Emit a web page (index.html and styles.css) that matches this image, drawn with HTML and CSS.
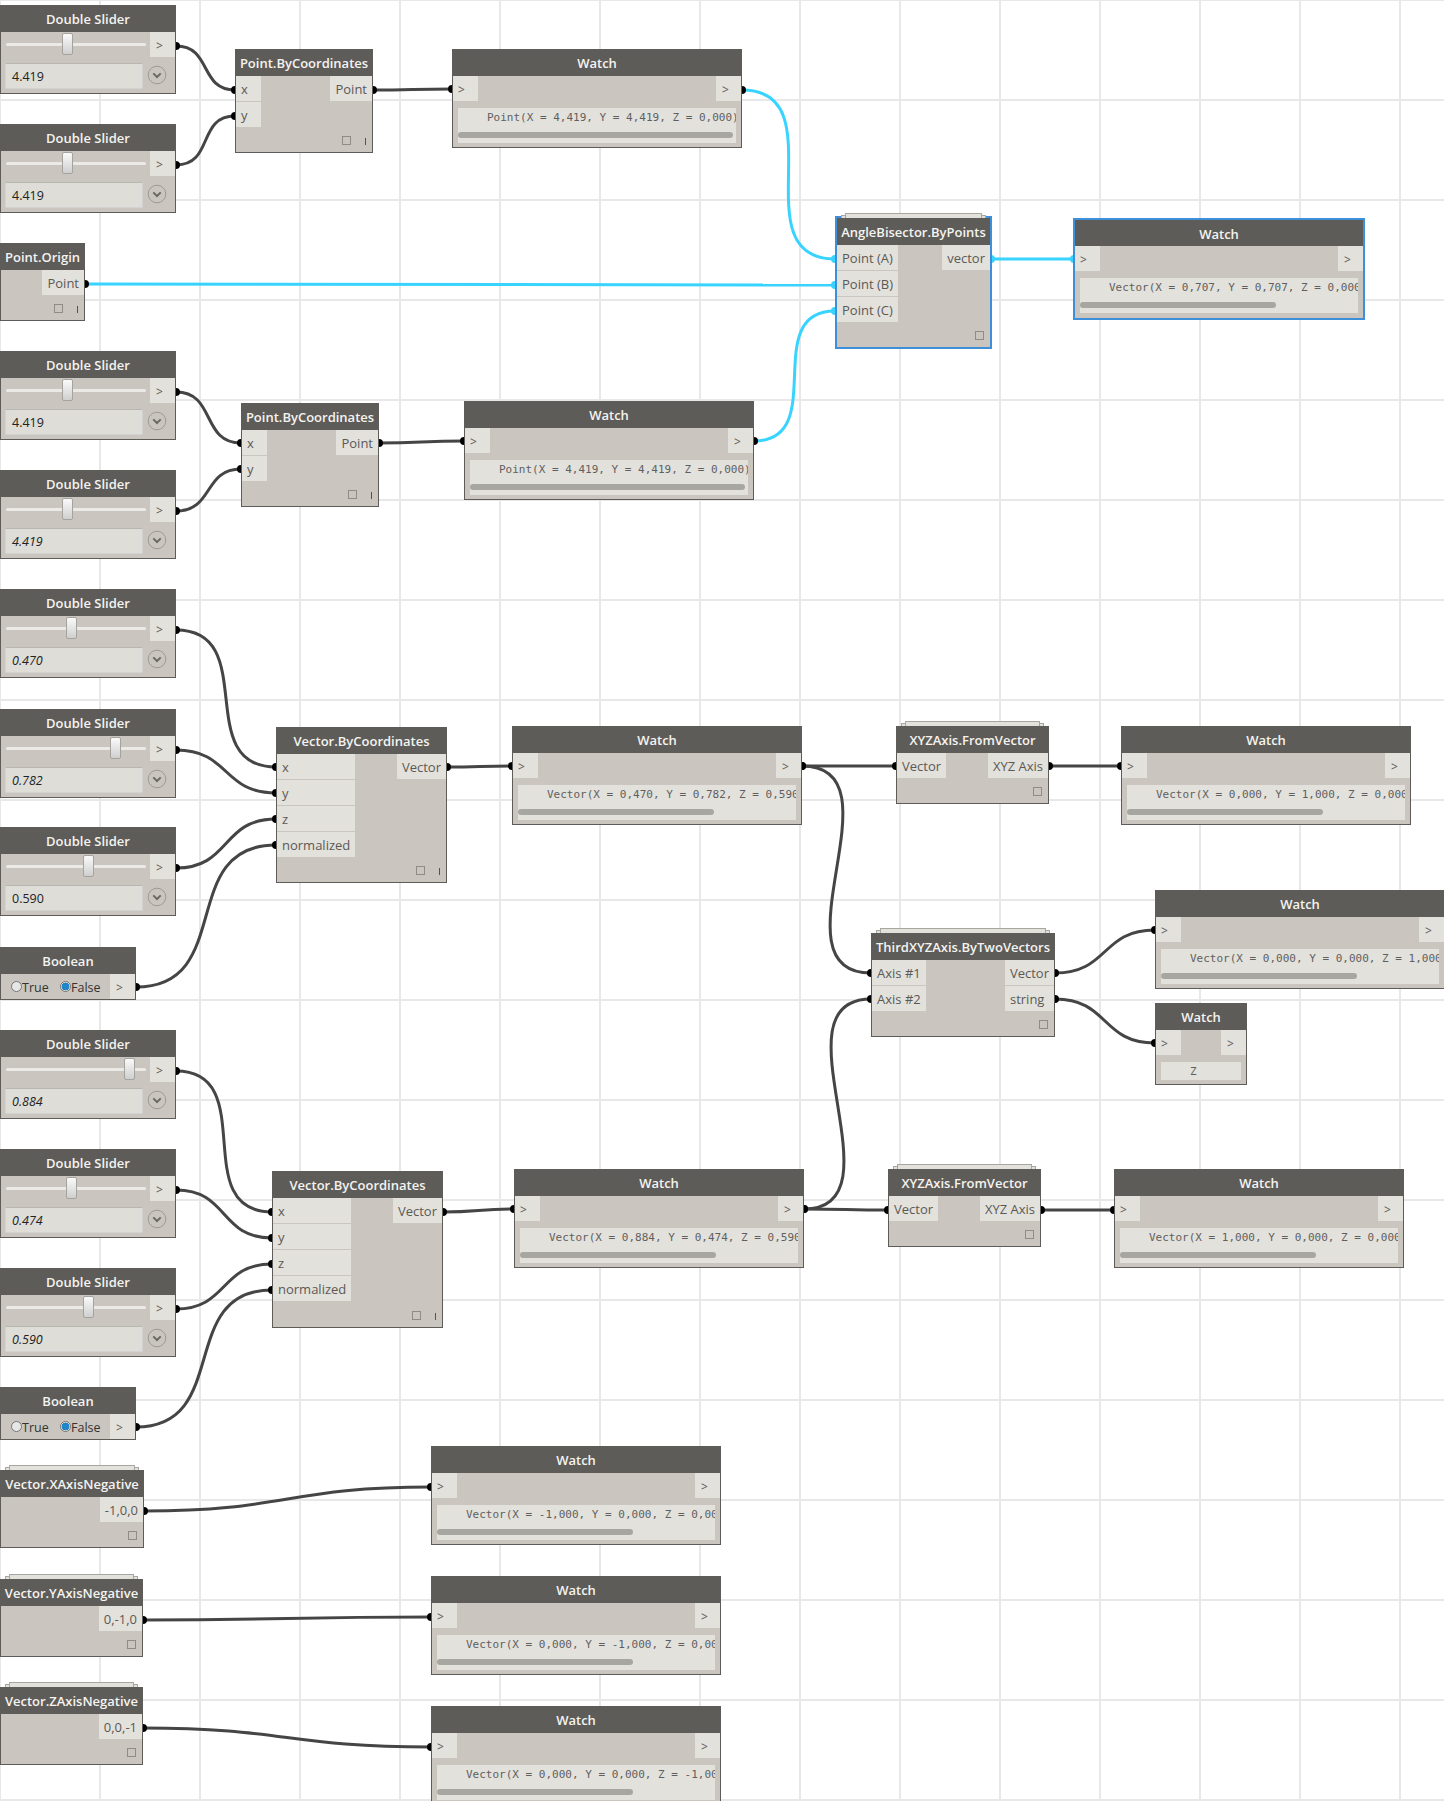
FILE: index.html
```html
<!DOCTYPE html>
<html lang="en">
<head>
    <meta charset="UTF-8">
    <title>Vector graph</title>
    <link rel="stylesheet" href="styles.css">
</head>
<body>
<div class="canvas">

    <!-- wires sit under the nodes, so the port dots show as half circles -->
    <svg class="wires" width="1444" height="1801">
        <defs>
            <marker id="dot" markerUnits="userSpaceOnUse" markerWidth="10" markerHeight="10" refX="5" refY="5"><circle cx="5" cy="5" r="4" fill="#000"/></marker>
            <marker id="dotHot" markerUnits="userSpaceOnUse" markerWidth="10" markerHeight="10" refX="5" refY="5"><circle cx="5" cy="5" r="4" fill="#38d4ff"/></marker>
        </defs>
        <g class="wire">
            <path marker-start="url(#dot)" marker-end="url(#dot)" d="M176 46 C212 46 199 90 235 90"/>
            <path marker-start="url(#dot)" marker-end="url(#dot)" d="M176 165 C214 165 197 116 235 116"/>
            <path marker-start="url(#dot)" marker-end="url(#dot)" d="M373 90 C412 90 413 89 452 89"/>
            <path marker-start="url(#dot)" marker-end="url(#dot)" d="M176 392 C216 392 201 443 241 443"/>
            <path marker-start="url(#dot)" marker-end="url(#dot)" d="M176 511 C214 511 203 469 241 469"/>
            <path marker-start="url(#dot)" marker-end="url(#dot)" d="M379 443 C421 443 422 441 464 441"/>
            <path marker-start="url(#dot)" marker-end="url(#dot)" d="M176 630 C261 630 191 767 276 767"/>
            <path marker-start="url(#dot)" marker-end="url(#dot)" d="M176 750 C230 750 222 793 276 793"/>
            <path marker-start="url(#dot)" marker-end="url(#dot)" d="M176 868 C231 868 221 819 276 819"/>
            <path marker-start="url(#dot)" marker-end="url(#dot)" d="M136 987 C236 987 176 845 276 845"/>
            <path marker-start="url(#dot)" marker-end="url(#dot)" d="M447 767 C480 767 480 766 512 766"/>
            <path marker-start="url(#dot)" marker-end="url(#dot)" d="M802 766 C850 766 850 766 896 766"/>
            <path marker-start="url(#dot)" marker-end="url(#dot)" d="M802 766 C905 766 768 973 871 973"/>
            <path marker-start="url(#dot)" marker-end="url(#dot)" d="M804 1209 C905 1209 770 999 871 999"/>
            <path marker-start="url(#dot)" marker-end="url(#dot)" d="M1055 973 C1109 973 1101 930 1155 930"/>
            <path marker-start="url(#dot)" marker-end="url(#dot)" d="M1055 999 C1109 999 1101 1043 1155 1043"/>
            <path marker-start="url(#dot)" marker-end="url(#dot)" d="M1049 766 C1085 766 1085 766 1121 766"/>
            <path marker-start="url(#dot)" marker-end="url(#dot)" d="M176 1071 C261 1071 187 1212 272 1212"/>
            <path marker-start="url(#dot)" marker-end="url(#dot)" d="M176 1190 C229 1190 219 1238 272 1238"/>
            <path marker-start="url(#dot)" marker-end="url(#dot)" d="M176 1309 C228 1309 220 1264 272 1264"/>
            <path marker-start="url(#dot)" marker-end="url(#dot)" d="M136 1427 C232 1427 176 1290 272 1290"/>
            <path marker-start="url(#dot)" marker-end="url(#dot)" d="M443 1212 C478 1212 479 1209 514 1209"/>
            <path marker-start="url(#dot)" marker-end="url(#dot)" d="M804 1209 C846 1209 846 1210 888 1210"/>
            <path marker-start="url(#dot)" marker-end="url(#dot)" d="M1041 1210 C1077 1210 1078 1210 1114 1210"/>
            <path marker-start="url(#dot)" marker-end="url(#dot)" d="M144 1511 C287 1511 288 1487 431 1487"/>
            <path marker-start="url(#dot)" marker-end="url(#dot)" d="M143 1620 C287 1620 287 1617 431 1617"/>
            <path marker-start="url(#dot)" marker-end="url(#dot)" d="M143 1728 C287 1728 287 1747 431 1747"/>
        </g>
        <g class="wire wire-hot">
            <path marker-start="url(#dot)" marker-end="url(#dotHot)" d="M742 90 C838 90 739 259 835 259"/>
            <path marker-start="url(#dot)" marker-end="url(#dotHot)" d="M85 284 L835 285"/>
            <path marker-start="url(#dot)" marker-end="url(#dotHot)" d="M754 441 C830 441 759 311 835 311"/>
            <path marker-start="url(#dotHot)" marker-end="url(#dotHot)" d="M991 259 C1032 259 1032 259 1074 259"/>
        </g>
    </svg>

    <!-- sliders -->
    <div class="node slider s1">
        <div class="node-title">Double Slider</div>
        <div class="slider-top"><div class="track"><span class="thumb at-67"></span></div><div class="port out-arrow">&gt;</div></div>
        <div class="slider-bottom"><div class="value">4.419</div><svg class="expand" width="20" height="20" viewBox="0 0 20 20"><circle cx="10" cy="10" r="8.8"/><path d="M6.3 8.4 L10 12 L13.7 8.4"/></svg></div>
    </div>
    <div class="node slider s2">
        <div class="node-title">Double Slider</div>
        <div class="slider-top"><div class="track"><span class="thumb at-67"></span></div><div class="port out-arrow">&gt;</div></div>
        <div class="slider-bottom"><div class="value">4.419</div><svg class="expand" width="20" height="20" viewBox="0 0 20 20"><circle cx="10" cy="10" r="8.8"/><path d="M6.3 8.4 L10 12 L13.7 8.4"/></svg></div>
    </div>
    <div class="node slider s3">
        <div class="node-title">Double Slider</div>
        <div class="slider-top"><div class="track"><span class="thumb at-67"></span></div><div class="port out-arrow">&gt;</div></div>
        <div class="slider-bottom"><div class="value">4.419</div><svg class="expand" width="20" height="20" viewBox="0 0 20 20"><circle cx="10" cy="10" r="8.8"/><path d="M6.3 8.4 L10 12 L13.7 8.4"/></svg></div>
    </div>
    <div class="node slider s4">
        <div class="node-title">Double Slider</div>
        <div class="slider-top"><div class="track"><span class="thumb at-67"></span></div><div class="port out-arrow">&gt;</div></div>
        <div class="slider-bottom"><div class="value edited">4.419</div><svg class="expand" width="20" height="20" viewBox="0 0 20 20"><circle cx="10" cy="10" r="8.8"/><path d="M6.3 8.4 L10 12 L13.7 8.4"/></svg></div>
    </div>
    <div class="node slider s5">
        <div class="node-title">Double Slider</div>
        <div class="slider-top"><div class="track"><span class="thumb at-71"></span></div><div class="port out-arrow">&gt;</div></div>
        <div class="slider-bottom"><div class="value edited">0.470</div><svg class="expand" width="20" height="20" viewBox="0 0 20 20"><circle cx="10" cy="10" r="8.8"/><path d="M6.3 8.4 L10 12 L13.7 8.4"/></svg></div>
    </div>
    <div class="node slider s6">
        <div class="node-title">Double Slider</div>
        <div class="slider-top"><div class="track"><span class="thumb at-115"></span></div><div class="port out-arrow">&gt;</div></div>
        <div class="slider-bottom"><div class="value edited">0.782</div><svg class="expand" width="20" height="20" viewBox="0 0 20 20"><circle cx="10" cy="10" r="8.8"/><path d="M6.3 8.4 L10 12 L13.7 8.4"/></svg></div>
    </div>
    <div class="node slider s7">
        <div class="node-title">Double Slider</div>
        <div class="slider-top"><div class="track"><span class="thumb at-88"></span></div><div class="port out-arrow">&gt;</div></div>
        <div class="slider-bottom"><div class="value">0.590</div><svg class="expand" width="20" height="20" viewBox="0 0 20 20"><circle cx="10" cy="10" r="8.8"/><path d="M6.3 8.4 L10 12 L13.7 8.4"/></svg></div>
    </div>
    <div class="node slider s8">
        <div class="node-title">Double Slider</div>
        <div class="slider-top"><div class="track"><span class="thumb at-129"></span></div><div class="port out-arrow">&gt;</div></div>
        <div class="slider-bottom"><div class="value edited">0.884</div><svg class="expand" width="20" height="20" viewBox="0 0 20 20"><circle cx="10" cy="10" r="8.8"/><path d="M6.3 8.4 L10 12 L13.7 8.4"/></svg></div>
    </div>
    <div class="node slider s9">
        <div class="node-title">Double Slider</div>
        <div class="slider-top"><div class="track"><span class="thumb at-71"></span></div><div class="port out-arrow">&gt;</div></div>
        <div class="slider-bottom"><div class="value edited">0.474</div><svg class="expand" width="20" height="20" viewBox="0 0 20 20"><circle cx="10" cy="10" r="8.8"/><path d="M6.3 8.4 L10 12 L13.7 8.4"/></svg></div>
    </div>
    <div class="node slider s10">
        <div class="node-title">Double Slider</div>
        <div class="slider-top"><div class="track"><span class="thumb at-88"></span></div><div class="port out-arrow">&gt;</div></div>
        <div class="slider-bottom"><div class="value edited">0.590</div><svg class="expand" width="20" height="20" viewBox="0 0 20 20"><circle cx="10" cy="10" r="8.8"/><path d="M6.3 8.4 L10 12 L13.7 8.4"/></svg></div>
    </div>

    <!-- booleans -->
    <div class="node bool b1">
        <div class="node-title">Boolean</div>
        <div class="bool-row"><span class="radio"></span><span class="radio-label">True</span><span class="radio on"></span><span class="radio-label">False</span><div class="port out-arrow">&gt;</div></div>
    </div>
    <div class="node bool b2">
        <div class="node-title">Boolean</div>
        <div class="bool-row"><span class="radio"></span><span class="radio-label">True</span><span class="radio on"></span><span class="radio-label">False</span><div class="port out-arrow">&gt;</div></div>
    </div>

    <!-- function nodes -->
    <div class="node pbc1">
        <div class="node-title">Point.ByCoordinates</div>
        <div class="ports"><div class="ports-in"><div class="port wide">x</div><div class="port wide">y</div></div><div class="ports-out"><div class="port">Point</div></div></div>
        <div class="node-foot"><span class="box"></span><span class="lace"></span></div>
    </div>
    <div class="node pbc2">
        <div class="node-title">Point.ByCoordinates</div>
        <div class="ports"><div class="ports-in"><div class="port wide">x</div><div class="port wide">y</div></div><div class="ports-out"><div class="port">Point</div></div></div>
        <div class="node-foot"><span class="box"></span><span class="lace"></span></div>
    </div>
    <div class="node origin">
        <div class="node-title">Point.Origin</div>
        <div class="ports"><div class="ports-in"></div><div class="ports-out"><div class="port">Point</div></div></div>
        <div class="node-foot"><span class="box"></span><span class="lace"></span></div>
    </div>
    <div class="node stacked selected angle">
        <div class="node-title">AngleBisector.ByPoints</div>
        <div class="ports"><div class="ports-in"><div class="port">Point (A)</div><div class="port">Point (B)</div><div class="port">Point (C)</div></div><div class="ports-out"><div class="port">vector</div></div></div>
        <div class="node-foot"><span class="box"></span></div>
    </div>
    <div class="node vbc1">
        <div class="node-title">Vector.ByCoordinates</div>
        <div class="ports"><div class="ports-in"><div class="port">x</div><div class="port">y</div><div class="port">z</div><div class="port">normalized</div></div><div class="ports-out"><div class="port">Vector</div></div></div>
        <div class="node-foot"><span class="box"></span><span class="lace"></span></div>
    </div>
    <div class="node vbc2">
        <div class="node-title">Vector.ByCoordinates</div>
        <div class="ports"><div class="ports-in"><div class="port">x</div><div class="port">y</div><div class="port">z</div><div class="port">normalized</div></div><div class="ports-out"><div class="port">Vector</div></div></div>
        <div class="node-foot"><span class="box"></span><span class="lace"></span></div>
    </div>
    <div class="node stacked xyz1">
        <div class="node-title">XYZAxis.FromVector</div>
        <div class="ports"><div class="ports-in"><div class="port">Vector</div></div><div class="ports-out"><div class="port">XYZ Axis</div></div></div>
        <div class="node-foot"><span class="box"></span></div>
    </div>
    <div class="node stacked xyz2">
        <div class="node-title">XYZAxis.FromVector</div>
        <div class="ports"><div class="ports-in"><div class="port">Vector</div></div><div class="ports-out"><div class="port">XYZ Axis</div></div></div>
        <div class="node-foot"><span class="box"></span></div>
    </div>
    <div class="node stacked third">
        <div class="node-title">ThirdXYZAxis.ByTwoVectors</div>
        <div class="ports"><div class="ports-in"><div class="port">Axis #1</div><div class="port">Axis #2</div></div><div class="ports-out"><div class="port">Vector</div><div class="port">string</div></div></div>
        <div class="node-foot"><span class="box"></span></div>
    </div>
    <div class="node stacked xneg">
        <div class="node-title">Vector.XAxisNegative</div>
        <div class="ports"><div class="ports-in"></div><div class="ports-out"><div class="port">-1,0,0</div></div></div>
        <div class="node-foot"><span class="box"></span></div>
    </div>
    <div class="node stacked yneg">
        <div class="node-title">Vector.YAxisNegative</div>
        <div class="ports"><div class="ports-in"></div><div class="ports-out"><div class="port">0,-1,0</div></div></div>
        <div class="node-foot"><span class="box"></span></div>
    </div>
    <div class="node stacked zneg">
        <div class="node-title">Vector.ZAxisNegative</div>
        <div class="ports"><div class="ports-in"></div><div class="ports-out"><div class="port">0,0,-1</div></div></div>
        <div class="node-foot"><span class="box"></span></div>
    </div>

    <!-- watches -->
    <div class="node watch w1">
        <div class="node-title">Watch</div>
        <div class="ports"><div class="port arrow">&gt;</div><div class="port arrow">&gt;</div></div>
        <div class="watch-box"><div class="watch-text">Point(X = 4,419, Y = 4,419, Z = 0,000)</div><div class="scroll full"></div></div>
    </div>
    <div class="node watch w2">
        <div class="node-title">Watch</div>
        <div class="ports"><div class="port arrow">&gt;</div><div class="port arrow">&gt;</div></div>
        <div class="watch-box"><div class="watch-text">Point(X = 4,419, Y = 4,419, Z = 0,000)</div><div class="scroll full"></div></div>
    </div>
    <div class="node watch selected wsel">
        <div class="node-title">Watch</div>
        <div class="ports"><div class="port arrow">&gt;</div><div class="port arrow">&gt;</div></div>
        <div class="watch-box"><div class="watch-text">Vector(X = 0,707, Y = 0,707, Z = 0,000)</div><div class="scroll"></div></div>
    </div>
    <div class="node watch w3">
        <div class="node-title">Watch</div>
        <div class="ports"><div class="port arrow">&gt;</div><div class="port arrow">&gt;</div></div>
        <div class="watch-box"><div class="watch-text">Vector(X = 0,470, Y = 0,782, Z = 0,590)</div><div class="scroll"></div></div>
    </div>
    <div class="node watch w4">
        <div class="node-title">Watch</div>
        <div class="ports"><div class="port arrow">&gt;</div><div class="port arrow">&gt;</div></div>
        <div class="watch-box"><div class="watch-text">Vector(X = 0,000, Y = 1,000, Z = 0,000)</div><div class="scroll"></div></div>
    </div>
    <div class="node watch w5">
        <div class="node-title">Watch</div>
        <div class="ports"><div class="port arrow">&gt;</div><div class="port arrow">&gt;</div></div>
        <div class="watch-box"><div class="watch-text">Vector(X = 0,000, Y = 0,000, Z = 1,000)</div><div class="scroll"></div></div>
    </div>
    <div class="node watch wstr">
        <div class="node-title">Watch</div>
        <div class="ports"><div class="port arrow">&gt;</div><div class="port arrow">&gt;</div></div>
        <div class="watch-box short"><div class="watch-text">Z</div></div>
    </div>
    <div class="node watch w6">
        <div class="node-title">Watch</div>
        <div class="ports"><div class="port arrow">&gt;</div><div class="port arrow">&gt;</div></div>
        <div class="watch-box"><div class="watch-text">Vector(X = 0,884, Y = 0,474, Z = 0,590)</div><div class="scroll"></div></div>
    </div>
    <div class="node watch w7">
        <div class="node-title">Watch</div>
        <div class="ports"><div class="port arrow">&gt;</div><div class="port arrow">&gt;</div></div>
        <div class="watch-box"><div class="watch-text">Vector(X = 1,000, Y = 0,000, Z = 0,000)</div><div class="scroll"></div></div>
    </div>
    <div class="node watch wx">
        <div class="node-title">Watch</div>
        <div class="ports"><div class="port arrow">&gt;</div><div class="port arrow">&gt;</div></div>
        <div class="watch-box"><div class="watch-text">Vector(X = -1,000, Y = 0,000, Z = 0,000)</div><div class="scroll"></div></div>
    </div>
    <div class="node watch wy">
        <div class="node-title">Watch</div>
        <div class="ports"><div class="port arrow">&gt;</div><div class="port arrow">&gt;</div></div>
        <div class="watch-box"><div class="watch-text">Vector(X = 0,000, Y = -1,000, Z = 0,000)</div><div class="scroll"></div></div>
    </div>
    <div class="node watch wz">
        <div class="node-title">Watch</div>
        <div class="ports"><div class="port arrow">&gt;</div><div class="port arrow">&gt;</div></div>
        <div class="watch-box"><div class="watch-text">Vector(X = 0,000, Y = 0,000, Z = -1,000)</div><div class="scroll"></div></div>
    </div>

</div>
</body>
</html>
```

FILE: styles.css
```css
* { box-sizing: border-box; }
body { margin: 0; font-family: "Open Sans", sans-serif; font-size: 13px; color: #5b5955; }

.canvas {
    position: relative;
    width: 1444px;
    height: 1801px;
    overflow: hidden;
    background-color: #fff;
    background-image:
        linear-gradient(to right, #e8e8e8 2px, transparent 2px),
        linear-gradient(to bottom, #e8e8e8 2px, transparent 2px);
    background-size: 100px 100px;
    background-position: -1px -1px;
}

.wires { position: absolute; left: 0; top: 0; }
.wire path { fill: none; stroke: #454545; stroke-width: 3; }
.wire-hot path { stroke: #38d4ff; }

/* nodes */
.node {
    position: absolute;
    display: flex;
    flex-direction: column;
    background: #cac6bf;
    border: 1px solid #5e5c58;
    border-top: none;
}
.node-title {
    flex: none;
    height: 27px;
    margin: 0 -1px;
    background: #5e5c58;
    color: #f4f3f0;
    font-weight: 600;
    font-size: 13px;
    line-height: 29px;
    text-align: center;
    white-space: nowrap;
}
.node.selected { border: 2px solid #3d8fd9; }
.node.selected .node-title { margin: 0; }

.ports { display: flex; justify-content: space-between; }
.ports-in, .ports-out { display: flex; flex-direction: column; gap: 1px; }
.port {
    height: 25px;
    padding: 0 5px;
    background: #e3e1dc;
    font-size: 13px;
    line-height: 27px;
    white-space: nowrap;
}
.port.wide { min-width: 25px; }
.port.arrow { width: 25px; font-size: 12px; }
.port.arrow:last-child { padding-left: 6px; }
.out-arrow { flex: none; width: 25px; padding: 0 6px; font-size: 12px; }

.node-foot {
    display: flex;
    align-items: flex-end;
    justify-content: flex-end;
    gap: 14px;
    margin-top: auto;
    padding: 0 6px 7px 0;
}
.box { width: 9px; height: 9px; border: 1px solid #8f8c87; }
.lace { width: 1px; height: 7px; background: #55534f; }

/* stacked outlines for list results */
.stacked::before, .stacked::after {
    content: "";
    position: absolute;
    z-index: -1;
    background: #e3e1dc;
    border: 1px solid #a8a6a1;
}
.stacked::before { left: 4px; right: 4px; top: -3px; height: 5px; }
.stacked::after { left: 8px; right: 8px; top: -5px; height: 5px; }
.node.stacked { z-index: 1; }

/* slider */
.slider { left: 0; width: 176px; height: 89px; }
.slider-top { display: flex; height: 25px; }
.track { position: relative; flex: 1; }
.track::before {
    content: "";
    position: absolute;
    left: 5px;
    top: 11px;
    width: 140px;
    height: 3px;
    background: #eceae6;
    border-radius: 2px;
}
.thumb {
    position: absolute;
    top: 1px;
    width: 11px;
    height: 22px;
    margin-left: -6px;
    background: linear-gradient(#fafafa, #cfcfcf);
    border: 1px solid #a5a39e;
    border-radius: 2px;
}
.at-67 { left: 67px; }
.at-71 { left: 71px; }
.at-88 { left: 88px; }
.at-115 { left: 115px; }
.at-129 { left: 129px; }
.slider-bottom { display: flex; align-items: center; gap: 4px; padding: 6px 0 0 4px; }
.value {
    width: 138px;
    height: 26px;
    padding: 1px 0 0 6px;
    background: #dfddd8;
    border: 1px solid #d1d3d2;
    border-top-color: #b8b6b1;
    border-radius: 2px;
    color: #222;
    font-size: 12.5px;
    line-height: 24px;
}
.value.edited { font-style: italic; }
.expand { margin-top: -2px; }
.expand circle { fill: none; stroke: #9d9a95; stroke-width: 1; }
.expand path { fill: none; stroke: #6b6965; stroke-width: 2; }

/* boolean */
.bool { left: 0; width: 136px; height: 53px; }
.bool-row { display: flex; align-items: center; height: 25px; padding-left: 10px; }
.radio {
    flex: none;
    width: 11px;
    height: 11px;
    border: 1px solid #777;
    border-radius: 50%;
    background: #e6e6e6;
}
.radio.on { background: radial-gradient(circle, #1f86c8 60%, #e6e6e6 65%); }
.radio-label { width: 38px; padding-top: 2px; color: #333; font-size: 12.5px; }
.bool-row .out-arrow { margin-left: auto; }

/* watch */
.watch { width: 290px; height: 99px; }
.watch .ports { height: 25px; }
.watch-box {
    position: relative;
    height: 35px;
    margin: 7px 5px 0;
    overflow: hidden;
    background: #e3e1dc;
}
.watch-box.short { height: 18px; }
.watch-text {
    padding: 1px 0 0 29px;
    color: #5f5f5f;
    font-family: "DejaVu Sans Mono", monospace;
    font-size: 11px;
    line-height: 17px;
    white-space: nowrap;
}
.scroll {
    position: absolute;
    left: 0;
    top: 24px;
    width: 196px;
    height: 6px;
    background: #a8a6a1;
    border-radius: 3px;
}
.scroll.full { width: 275px; }

/* places on the canvas */
.s1 { top: 5px; }
.s2 { top: 124px; }
.s3 { top: 351px; }
.s4 { top: 470px; }
.s5 { top: 589px; }
.s6 { top: 709px; }
.s7 { top: 827px; }
.s8 { top: 1030px; }
.s9 { top: 1149px; }
.s10 { top: 1268px; }
.b1 { top: 947px; }
.b2 { top: 1387px; }
.pbc1 { left: 235px; top: 49px; width: 138px; height: 104px; }
.pbc2 { left: 241px; top: 403px; width: 138px; height: 104px; }
.origin { left: 0; top: 243px; width: 85px; height: 78px; }
.angle { left: 835px; top: 216px; width: 157px; height: 133px; }
.vbc1 { left: 276px; top: 727px; width: 171px; height: 156px; }
.vbc2 { left: 272px; top: 1171px; width: 171px; height: 157px; }
.xyz1 { left: 896px; top: 726px; width: 153px; height: 78px; }
.xyz2 { left: 888px; top: 1169px; width: 153px; height: 78px; }
.third { left: 871px; top: 933px; width: 184px; height: 104px; }
.xneg { left: 0; top: 1470px; width: 144px; height: 78px; }
.yneg { left: 0; top: 1579px; width: 143px; height: 78px; }
.zneg { left: 0; top: 1687px; width: 143px; height: 78px; }
.w1 { left: 452px; top: 49px; }
.w2 { left: 464px; top: 401px; }
.wsel { left: 1073px; top: 218px; width: 292px; height: 102px; }
.wsel .node-title { height: 26px; }
.w3 { left: 512px; top: 726px; }
.w4 { left: 1121px; top: 726px; }
.w5 { left: 1155px; top: 890px; }
.wstr { left: 1155px; top: 1003px; width: 92px; height: 82px; }
.w6 { left: 514px; top: 1169px; }
.w7 { left: 1114px; top: 1169px; }
.wx { left: 431px; top: 1446px; }
.wy { left: 431px; top: 1576px; }
.wz { left: 431px; top: 1706px; }
```
